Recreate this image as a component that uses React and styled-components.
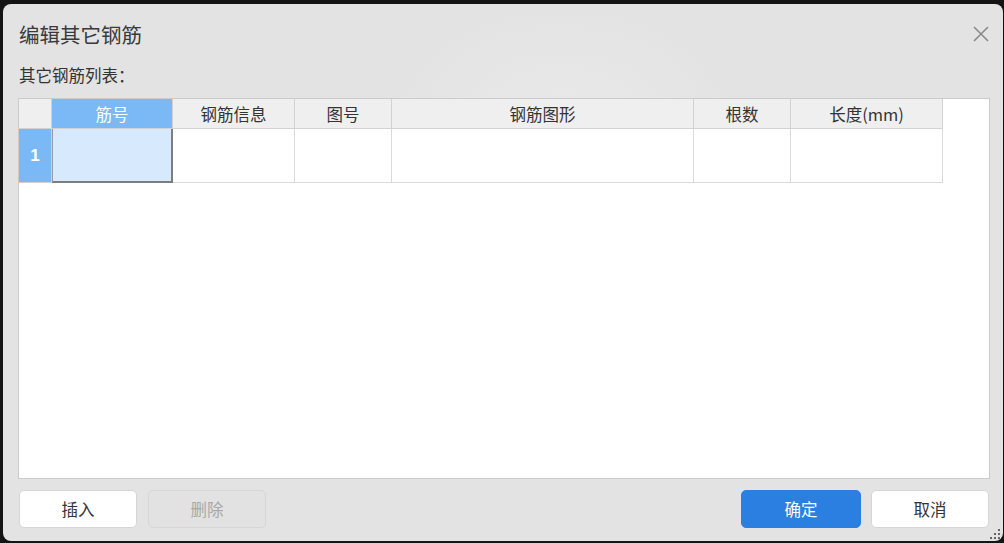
import React from "react";
import styled, { createGlobalStyle } from "styled-components";

const GlobalStyle = createGlobalStyle`
  html, body {
    margin: 0;
    padding: 0;
    background: #141414;
    overflow: hidden;
  }
  body {
    font-family: "Noto Sans CJK SC", "Noto Sans", "Liberation Sans", sans-serif;
  }
`;

const Page = styled.div`
  width: 1004px;
  height: 543px;
  padding: 4px 1px 2px 3px;
  box-sizing: border-box;
`;

const Dialog = styled.div`
  position: relative;
  height: 100%;
  border-radius: 8px;
  background: radial-gradient(ellipse 260px 180px at 560px 120px, #e9e9e9, #e3e3e3 70%),
    #e3e3e3;
  padding: 0 13px 0 15px;
  box-sizing: border-box;
  display: flex;
  flex-direction: column;
  color: #333;
`;

const TitleBar = styled.div`
  height: 60px;
  display: flex;
  align-items: center;
  justify-content: space-between;
`;

const Title = styled.div`
  font-size: 20.5px;
  color: #3a3a3a;
  padding-left: 1px;
`;

const CloseButton = styled.button`
  border: none;
  background: none;
  padding: 0;
  width: 16px;
  height: 16px;
  margin-right: 1px;
  cursor: pointer;
  display: flex;
`;

const Label = styled.div`
  font-size: 16.5px;
  line-height: 22px;
  height: 22px;
  margin-bottom: 12px;
  padding-left: 1px;
`;

const TableBox = styled.div`
  height: 381px;
  box-sizing: border-box;
  border: 1px solid #cbcbcb;
  background: #fff;
`;

const Grid = styled.div`
  display: grid;
  grid-template-columns: 33px 121px 122px 97px 302px 97px 152px;
  grid-template-rows: 30px 54px;
  width: 924px;
`;

const HeadCell = styled.div`
  box-sizing: border-box;
  border-right: 1px solid #d2d2d2;
  border-bottom: 1px solid #d2d2d2;
  background: ${(p) => (p.$active ? "#7ab8f6" : "#efefef")};
  color: ${(p) => (p.$active ? "#fff" : "#333")};
  font-size: 16.5px;
  display: flex;
  align-items: center;
  justify-content: center;
`;

const RowHead = styled.div`
  box-sizing: border-box;
  border-right: 1px solid #d2d2d2;
  border-bottom: 1px solid #d2d2d2;
  background: #7ab8f6;
  color: #fff;
  font-family: "Liberation Sans", sans-serif;
  font-weight: bold;
  font-size: 17px;
  display: flex;
  align-items: center;
  justify-content: center;
`;

const Cell = styled.div`
  box-sizing: border-box;
  border-right: 1px solid #dadada;
  border-bottom: 1px solid #dadada;
  background: ${(p) => (p.$selected ? "#d6e9fd" : "#fff")};
  ${(p) =>
    p.$selected &&
    `border-right: 2px solid #7d7d7d; border-bottom: 2px solid #7d7d7d; border-left: 1px solid #9a9a9a;`}
`;

const Footer = styled.div`
  display: flex;
  align-items: center;
  margin-top: 11px;
  padding: 0 1px 0 1px;
  gap: 11px;
`;

const Spacer = styled.div`
  flex: 1;
`;

const Button = styled.button`
  width: ${(p) => (p.$primary ? "120px" : "118px")};
  height: 38px;
  border-radius: 5px;
  box-sizing: border-box;
  font-family: "Noto Sans CJK SC", sans-serif;
  font-size: 16.5px;
  cursor: pointer;
  border: 1px solid ${(p) => (p.$primary ? "#2b7fe0" : "#d6d6d6")};
  background: ${(p) => (p.$primary ? "#2b7fe0" : p.disabled ? "#e2e2e2" : "#fff")};
  color: ${(p) => (p.$primary ? "#fff" : p.disabled ? "#a9a9a9" : "#333")};
  ${(p) => p.$primary && "margin-right: -1px;"}
`;

const Grip = styled.svg`
  position: absolute;
  right: 2px;
  bottom: 1px;
`;

const columns = ["筋号", "钢筋信息", "图号", "钢筋图形", "根数", "长度(mm)"];

export default function App() {
  return (
    <Page>
      <GlobalStyle />
      <Dialog>
        <TitleBar>
          <Title>编辑其它钢筋</Title>
          <CloseButton aria-label="关闭">
            <svg width="16" height="16" viewBox="0 0 16 16">
              <path d="M1 1 L15 15 M15 1 L1 15" stroke="#8a8a8a" strokeWidth="1.6" />
            </svg>
          </CloseButton>
        </TitleBar>
        <Label>其它钢筋列表：</Label>
        <TableBox>
          <Grid>
            <HeadCell />
            {columns.map((c, i) => (
              <HeadCell key={c} $active={i === 0}>
                {c}
              </HeadCell>
            ))}
            <RowHead>1</RowHead>
            {columns.map((c, i) => (
              <Cell key={c} $selected={i === 0} />
            ))}
          </Grid>
        </TableBox>
        <Footer>
          <Button>插入</Button>
          <Button disabled>删除</Button>
          <Spacer />
          <Button $primary>确定</Button>
          <Button>取消</Button>
        </Footer>
        <Grip width="12" height="12" viewBox="0 0 12 12">
          {[
            [9, 1],
            [5, 5],
            [9, 5],
            [1, 9],
            [5, 9],
            [9, 9],
          ].map(([x, y]) => (
            <rect key={`${x}-${y}`} x={x} y={y} width="2" height="2" fill="#666" />
          ))}
        </Grip>
      </Dialog>
    </Page>
  );
}
